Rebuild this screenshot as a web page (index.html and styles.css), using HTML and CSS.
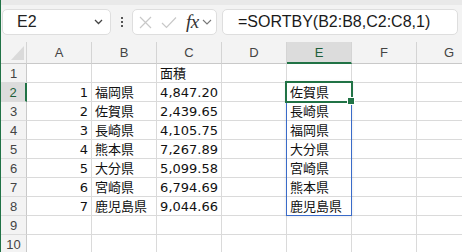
FILE: index.html
```html
<!DOCTYPE html>
<html>
<head>
    <title>SORTBY</title>
    <link rel="stylesheet" href="styles.css">
</head>
<body>

<div class="window">
    <div class="top-strip"></div>

    <div class="formula-bar">
        <div class="name-box">
            <span>E2</span>
            <svg class="chev" width="9" height="6" viewBox="0 0 9 6"><path d="M1 1 L4.5 4.5 L8 1" fill="none" stroke="#444" stroke-width="1.3"/></svg>
        </div>
        <div class="grip"><i></i><i></i><i></i></div>
        <div class="fn-box">
            <svg width="13" height="13" viewBox="0 0 13 13"><path d="M1 1 L12 12 M12 1 L1 12" stroke="#c8c8c8" stroke-width="1.2"/></svg>
            <svg width="16" height="13" viewBox="0 0 16 13"><path d="M1 7 L5.5 11.5 L15 1.5" fill="none" stroke="#c8c8c8" stroke-width="1.2"/></svg>
            <span class="fx">fx</span>
            <svg width="10" height="6" viewBox="0 0 10 6"><path d="M1 1 L5 5 L9 1" fill="none" stroke="#777" stroke-width="1.1"/></svg>
        </div>
        <div class="formula">=SORTBY(B2:B8,C2:C8,1)</div>
    </div>

    <div class="sheet">
        <div class="corner"><div class="tri"></div></div>
        <div class="col-head">A</div>
        <div class="col-head">B</div>
        <div class="col-head">C</div>
        <div class="col-head">D</div>
        <div class="col-head sel">E</div>
        <div class="col-head">F</div>
        <div class="col-head">G</div>

        <div class="row-head">1</div>
        <div class="cell"></div><div class="cell"></div><div class="cell">面積</div><div class="cell"></div><div class="cell"></div><div class="cell"></div><div class="cell"></div>

        <div class="row-head sel">2</div>
        <div class="cell num">1</div><div class="cell">福岡県</div><div class="cell num">4,847.20</div><div class="cell"></div><div class="cell">佐賀県</div><div class="cell"></div><div class="cell"></div>

        <div class="row-head">3</div>
        <div class="cell num">2</div><div class="cell">佐賀県</div><div class="cell num">2,439.65</div><div class="cell"></div><div class="cell">長崎県</div><div class="cell"></div><div class="cell"></div>

        <div class="row-head">4</div>
        <div class="cell num">3</div><div class="cell">長崎県</div><div class="cell num">4,105.75</div><div class="cell"></div><div class="cell">福岡県</div><div class="cell"></div><div class="cell"></div>

        <div class="row-head">5</div>
        <div class="cell num">4</div><div class="cell">熊本県</div><div class="cell num">7,267.89</div><div class="cell"></div><div class="cell">大分県</div><div class="cell"></div><div class="cell"></div>

        <div class="row-head">6</div>
        <div class="cell num">5</div><div class="cell">大分県</div><div class="cell num">5,099.58</div><div class="cell"></div><div class="cell">宮崎県</div><div class="cell"></div><div class="cell"></div>

        <div class="row-head">7</div>
        <div class="cell num">6</div><div class="cell">宮崎県</div><div class="cell num">6,794.69</div><div class="cell"></div><div class="cell">熊本県</div><div class="cell"></div><div class="cell"></div>

        <div class="row-head">8</div>
        <div class="cell num">7</div><div class="cell">鹿児島県</div><div class="cell num">9,044.66</div><div class="cell"></div><div class="cell">鹿児島県</div><div class="cell"></div><div class="cell"></div>

        <div class="row-head">9</div>
        <div class="cell"></div><div class="cell"></div><div class="cell"></div><div class="cell"></div><div class="cell"></div><div class="cell"></div><div class="cell"></div>

        <div class="row-head">10</div>
        <div class="cell"></div><div class="cell"></div><div class="cell"></div><div class="cell"></div><div class="cell"></div><div class="cell"></div><div class="cell"></div>

        <!-- spill range E2:E8 and active cell -->
        <div class="spill"></div>
        <div class="active"><div class="handle"></div></div>
    </div>
</div>

</body>
</html>
```

FILE: styles.css
```css
html, body {
    margin: 0;
    padding: 0;
    overflow: hidden;
    background: #ffffff;
}

.window {
    width: 462px;
    height: 252px;
    border-left: 1px solid #217346;
    box-sizing: border-box;
    overflow: hidden;
    font-family: "Liberation Sans", Arial, sans-serif;
}

.top-strip {
    height: 5px;
    background: #e9e9e9;
}

.formula-bar {
    height: 37px;
    background: #f3f3f3;
    display: flex;
    align-items: flex-start;
    padding-top: 4px;
    padding-left: 1px;
    box-sizing: border-box;
}

.name-box, .fn-box, .formula {
    height: 26px;
    background: #ffffff;
    border: 1px solid #dedede;
    border-radius: 5px;
    box-sizing: border-box;
    display: flex;
    align-items: center;
}

.name-box {
    width: 109px;
    padding: 0 7px 0 14px;
    justify-content: space-between;
    font-size: 16px;
    color: #222;
}

.grip {
    width: 21px;
    display: flex;
    flex-direction: column;
    align-items: center;
    gap: 2px;
    padding-top: 8px;
    padding-left: 1px;
    box-sizing: border-box;
}

.grip i {
    width: 2px;
    height: 2px;
    background: #555;
}

.fn-box {
    width: 85px;
    padding-left: 6px;
    gap: 0;
}

.fn-box svg:nth-child(2) {
    margin-left: 9px;
}

.fx {
    font-family: "Liberation Serif", "DejaVu Serif", serif;
    font-style: italic;
    font-size: 19px;
    color: #333;
    margin-left: 9px;
    margin-right: 3px;
    letter-spacing: -0.5px;
}

.formula {
    flex: 1;
    margin-left: 5px;
    margin-right: 4px;
    padding-left: 15px;
    font-size: 16px;
    color: #1a1a1a;
    white-space: nowrap;
}

.sheet {
    position: relative;
    display: grid;
    grid-template-columns: 26px repeat(7, 65px);
    grid-template-rows: 22px repeat(10, 19px);
}

.sheet > div {
    box-sizing: border-box;
}

.corner, .col-head, .row-head {
    background: #f3f3f3;
    border-right: 1px solid #d4d4d4;
    border-bottom: 1px solid #c9c9c9;
    color: #444;
    font-size: 13px;
    display: flex;
    align-items: center;
    justify-content: center;
}

.row-head {
    border-bottom: 1px solid #dcdcdc;
    border-right: 1px solid #c9c9c9;
}

.corner {
    align-items: flex-end;
    justify-content: flex-end;
    padding: 0 2px 3px 0;
}

.tri {
    width: 13px;
    height: 14px;
    background: #dadada;
    clip-path: polygon(100% 0, 100% 100%, 0 100%);
}

.col-head.sel {
    background: #dcdcdc;
    border-bottom: 2px solid #217346;
    color: #1e5f3a;
}

.row-head.sel {
    background: #dcdcdc;
    border-right: 2px solid #217346;
    color: #1e5f3a;
}

.cell {
    border-right: 1px solid #dadada;
    border-bottom: 1px solid #dadada;
    font-family: "DejaVu Sans", "Noto Sans CJK JP", sans-serif;
    font-size: 13px;
    line-height: 19px;
    padding: 0 3px 0 3px;
    color: #111;
    white-space: nowrap;
    overflow: visible;
}

.cell.num {
    text-align: right;
}

.spill {
    position: absolute;
    left: 285px;
    top: 40px;
    width: 66px;
    height: 134px;
    border: 1px solid #3a6bc9;
    box-sizing: border-box;
    box-shadow: 0 0 3px rgba(0, 0, 0, 0.12);
}

.active {
    position: absolute;
    left: 284px;
    top: 39px;
    width: 68px;
    height: 22px;
    border: 2px solid #217346;
    box-sizing: border-box;
}

.handle {
    position: absolute;
    right: -4px;
    bottom: -4px;
    width: 6px;
    height: 6px;
    background: #217346;
    border: 1px solid #ffffff;
}
```
